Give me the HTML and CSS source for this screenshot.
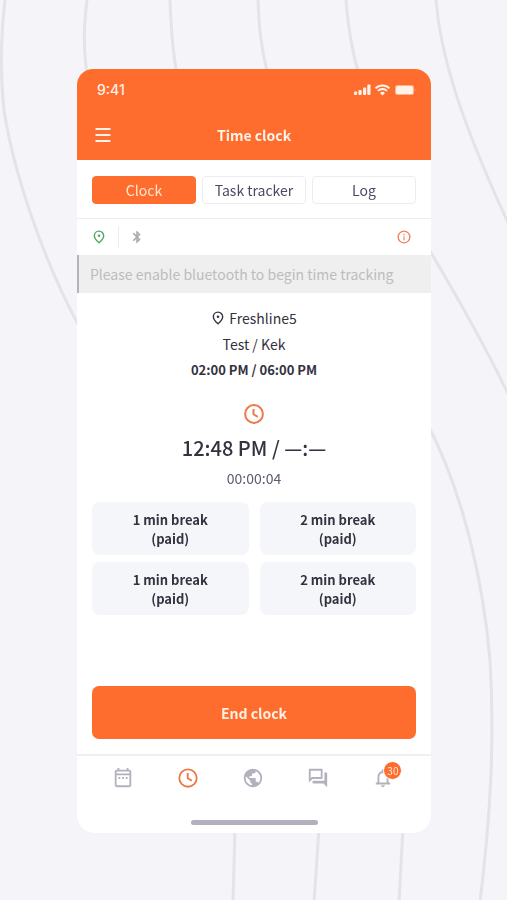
FILE: index.html
```html
<!DOCTYPE html>
<html lang="en">
<head>
<meta charset="utf-8">
<meta name="viewport" content="width=device-width, initial-scale=1">
<title>Time clock</title>
<link rel="stylesheet" href="styles.css">
</head>
<body>
<svg class="backdrop" viewBox="0 0 507 900" preserveAspectRatio="xMidYMid slice" aria-hidden="true">
  <path d="M5 0C1 35 0 75 4 110C13 170 42 258 80 328"/>
  <path d="M87 0C84 25 83 45 87 75"/>
  <path d="M170 0C171 28 172 48 177 75"/>
  <path d="M258 0C259 28 261 48 268 75"/>
  <path d="M346 0C348 28 351 48 359 75"/>
  <path d="M436 0C440 50 456 110 509 225"/>
  <path d="M427 246C455 293 485 345 509 396"/>
  <path d="M427 423C466 498 484 590 490 660C495 745 490 820 480 902"/>
  <path d="M235 828L233 902"/>
  <path d="M319 828L314 902"/>
  <path d="M403 828L399 902"/>
</svg>
<main class="phone">
  <header class="header">
    <div class="status">
      <span class="status-time">9:41</span>
      <svg class="status-icons" viewBox="0 0 62 12" fill="currentColor" aria-hidden="true">
        <rect x="0" y="7.500" width="3.200" height="3.500" rx="1"/><rect x="4.500" y="6" width="3.200" height="5" rx="1"/><rect x="9" y="3.500" width="3.200" height="7.500" rx="1"/><rect x="13.300" y="0.500" width="3.200" height="10.500" rx="1"/>
        <path d="M21.500 4.400a10 10 0 0 1 14 0M23.900 6.900a6.600 6.600 0 0 1 9.200 0" fill="none" stroke="currentColor" stroke-width="1.900"/>
        <path d="M26 9a3.600 3.600 0 0 1 5 0L28.500 11.500z"/>
        <rect x="41" y="1" width="19" height="10" rx="2.500" opacity=".5"/><rect x="42" y="2" width="17" height="8" rx="1.500"/><path d="M60.800 4.300q1.200 1.700 0 3.400z" opacity=".6"/>
      </svg>
    </div>
    <div class="titlebar">
      <button class="menu" aria-label="Menu"><svg viewBox="0 0 16 14" aria-hidden="true"><path d="M0.500 1h15M0.500 7h15M0.500 13h15"/></svg></button>
      <h1 class="title">Time clock</h1>
    </div>
  </header>

  <nav class="tabs" aria-label="Views">
    <button class="tab tab-active">Clock</button>
    <button class="tab">Task tracker</button>
    <button class="tab">Log</button>
  </nav>

  <div class="signals">
    <svg class="signal-pin" viewBox="0 0 24 24" aria-hidden="true"><path d="M12 2C7.600 2 4 5.500 4 9.900 4 15 12 22 12 22s8-7 8-12.100C20 5.500 16.400 2 12 2z" fill="none" stroke="currentColor" stroke-width="2.400"/><circle cx="12" cy="9.800" r="2.200" fill="currentColor"/></svg>
    <span class="signal-split"></span>
    <svg class="signal-bt" viewBox="0 0 24 24" fill="currentColor" aria-hidden="true"><path d="M17.710 7.710L12 2h-1v7.590L6.410 5 5 6.410 10.590 12 5 17.590 6.410 19 11 14.410V22h1l5.710-5.710-4.300-4.290 4.300-4.290zM13 5.830l1.880 1.880L13 9.590V5.830zm1.880 10.460L13 18.170v-3.760l1.880 1.880z" stroke="currentColor" stroke-width=".8"/></svg>
    <button class="info" aria-label="Information"><svg viewBox="0 0 24 24" aria-hidden="true"><circle cx="12" cy="12" r="10" fill="none" stroke="currentColor" stroke-width="2.400"/><path d="M11 6.500h2v2.300h-2zM11 10.500h2v7h-2z" fill="currentColor"/></svg></button>
  </div>

  <p class="notice">Please enable bluetooth to begin time tracking</p>

  <section class="shift">
    <p class="line place"><svg class="place-pin" viewBox="0 0 24 24" aria-hidden="true"><path d="M12 2C7.600 2 4 5.500 4 9.900 4 15 12 22 12 22s8-7 8-12.100C20 5.500 16.400 2 12 2z" fill="none" stroke="currentColor" stroke-width="2.400"/><circle cx="12" cy="9.800" r="2.200" fill="currentColor"/></svg>Freshline5</p>
    <p class="line">Test / Kek</p>
    <p class="line hours">02:00 PM / 06:00 PM</p>
    <svg class="shift-clock" viewBox="0 0 20 20" aria-hidden="true"><circle cx="10" cy="10" r="8.900"/><path d="M9.500 5v5.300l4.300 2.600"/></svg>
    <p class="now">12:48 PM / —:—</p>
    <p class="elapsed">00:00:04</p>
  </section>

  <section class="breaks" aria-label="Breaks">
    <button class="break">1 min break<br>(paid)</button>
    <button class="break">2 min break<br>(paid)</button>
    <button class="break">1 min break<br>(paid)</button>
    <button class="break">2 min break<br>(paid)</button>
  </section>

  <button class="end">End clock</button>

  <nav class="bottom" aria-label="Main">
    <a class="dest" href="#schedule" aria-label="Schedule"><svg viewBox="0 0 24 24" fill="currentColor" aria-hidden="true"><path d="M19 3h-1V1h-2v2H8V1H6v2H5a2 2 0 0 0-2 2v15a2 2 0 0 0 2 2h14a2 2 0 0 0 2-2V5a2 2 0 0 0-2-2zm0 17H5V9h14zM5 7V5h14v2zM7 11h2v2H7zm4 0h2v2h-2zm4 0h2v2h-2z"/></svg></a>
    <a class="dest dest-active" href="#clock" aria-label="Clock"><svg viewBox="0 0 24 24" fill="none" stroke="currentColor" stroke-width="2" aria-hidden="true"><circle cx="12" cy="12" r="9.500"/><path d="M11.700 6.500v5.800l4.500 2.700"/></svg></a>
    <a class="dest" href="#feed" aria-label="Feed"><svg viewBox="0 0 24 24" fill="currentColor" aria-hidden="true"><path d="M12 2C6.480 2 2 6.480 2 12s4.480 10 10 10 10-4.480 10-10S17.520 2 12 2zm-1 17.930c-3.950-.49-7-3.850-7-7.930 0-.62.080-1.210.210-1.790L9 15v1c0 1.100.9 2 2 2v1.930zm6.900-2.540c-.26-.81-1-1.390-1.900-1.390h-1v-3c0-.55-.45-1-1-1H8v-2h2c.55 0 1-.45 1-1V7h2c1.100 0 2-.9 2-2v-.41c2.930 1.190 5 4.060 5 7.410 0 2.080-.8 3.970-2.100 5.390z"/></svg></a>
    <a class="dest" href="#chat" aria-label="Chat"><svg viewBox="0 0 24 24" fill="currentColor" aria-hidden="true"><path d="M15 4v7H5.170L4 12.170V4h11m1-2H3c-.55 0-1 .45-1 1v14l4-4h10c.55 0 1-.45 1-1V3c0-.55-.45-1-1-1zm5 4h-2v9H6v2c0 .55.450 1 1 1h11l4 4V7c0-.55-.45-1-1-1z"/></svg></a>
    <a class="dest" href="#alerts" aria-label="Alerts"><svg viewBox="0 0 24 24" fill="currentColor" aria-hidden="true"><path d="M12 22c1.100 0 2-.9 2-2h-4c0 1.100.9 2 2 2zm6-6v-5c0-3.070-1.630-5.640-4.500-6.320V4c0-.83-.67-1.500-1.500-1.500s-1.500.67-1.500 1.500v.68C7.640 5.360 6 7.920 6 11v5l-2 2v1h16v-1l-2-2zm-2 1H8v-6c0-2.480 1.510-4.500 4-4.500s4 2.020 4 4.500v6z"/></svg><span class="badge">30</span></a>
  </nav>
  <div class="home"></div>
</main>
</body>
</html>
```
FILE: styles.css
```css
* { box-sizing: border-box; }

:root {
  --orange: #ff6d2e;
  --ink: #33323f;
  --muted: #b2b2be;
  --line: #ececf0;
}

body {
  margin: 0;
  min-height: 100vh;
  padding: 69px 76px 67px 77px;
  background: #f4f4f9;
  font-family: "Noto Sans CJK SC", "Noto Sans", sans-serif;
  font-size: 14px;
  line-height: 20px;
  color: var(--ink);
}

h1, p { margin: 0; }

button {
  border: 0;
  padding: 0;
  background: none;
  font: inherit;
  color: inherit;
}

svg { display: block; }

.backdrop {
  position: fixed;
  inset: 0;
  z-index: -1;
  width: 100%;
  height: 100%;
  fill: none;
  stroke: #e3e3e8;
  stroke-width: 3;
}

.phone {
  display: flex;
  flex-direction: column;
  background: #fff;
  border-radius: 18px;
}

.header {
  padding: 11px 15px 15px 18px;
  border-radius: 16px 16px 0 0;
  background: var(--orange);
  color: #fff2e8;
}

.status {
  display: flex;
  align-items: center;
  justify-content: space-between;
  padding-left: 2px;
}

.status-time {
  font-family: Inter, sans-serif;
  font-size: 14px;
  font-weight: 500;
}

.status-icons { width: 62px; height: 12px; }

.titlebar {
  display: grid;
  grid-template-columns: 16px 1fr 16px;
  align-items: center;
  margin-top: 25px;
  padding-right: 3px;
}

.menu svg {
  width: 16px;
  height: 14px;
  stroke: currentColor;
  stroke-width: 2;
}

.title {
  font-size: 14px;
  font-weight: 700;
  line-height: 20px;
  text-align: center;
}

.tabs {
  display: grid;
  grid-template-columns: repeat(3, 1fr);
  gap: 6px;
  padding: 16px 15px 14px;
  border-bottom: 1px solid var(--line);
}

.tab {
  height: 28px;
  border: 1px solid var(--line);
  border-radius: 4px;
  color: #4c4965;
}

.tab-active {
  border-color: var(--orange);
  background: var(--orange);
  color: #ffe6d2;
}

.signals {
  display: flex;
  align-items: center;
  height: 36px;
  padding: 0 20px 0 15px;
}

.signal-pin { width: 14px; height: 14px; color: #4fa662; }
.signal-split { width: 1px; height: 22px; margin: 0 11px 0 12px; background: var(--line); }
.signal-bt { width: 14px; height: 14px; color: #a9a9ad; }
.info { margin-left: auto; color: #f0855a; }
.info svg { width: 14px; height: 14px; }

.notice {
  padding: 9px 13px 9px 11px;
  border-left: 2px solid #b4b4b4;
  background: #efefef;
  color: #bcbcbe;
}

.shift {
  display: flex;
  flex-direction: column;
  align-items: center;
  padding-top: 12px;
}

.line { line-height: 26px; }
.place { display: flex; align-items: center; gap: 4px; }
.place-pin { width: 14px; height: 14px; }
.hours { font-size: 13px; font-weight: 700; }

.shift-clock {
  width: 20px;
  height: 20px;
  margin-top: 21px;
  fill: none;
  stroke: #ec7b4b;
  stroke-width: 2;
}

.now {
  margin-top: 8px;
  font-size: 20px;
  font-weight: 500;
  line-height: 32px;
}

.elapsed { margin-top: 4px; color: #5d5b70; }

.breaks {
  display: grid;
  grid-template-columns: 1fr 1fr;
  gap: 7px 11px;
  padding: 14px 15px 0;
}

.break {
  height: 53px;
  border-radius: 8px;
  background: #f5f6fa;
  font-size: 13px;
  font-weight: 700;
  line-height: 19px;
}

.end {
  margin: 71px 15px 15px;
  height: 53px;
  border-radius: 7px;
  background: var(--orange);
  color: #fff0e2;
  font-weight: 700;
}

.bottom {
  display: grid;
  grid-template-columns: repeat(5, 1fr);
  padding: 11px 15px 0 13px;
  border-top: 2px solid #f0f0f3;
}

.dest {
  position: relative;
  display: flex;
  justify-content: center;
  color: var(--muted);
}

.dest svg { width: 22px; height: 22px; }
.dest-active { color: #ee7845; }

.badge {
  position: absolute;
  top: -6px;
  left: 50%;
  width: 19px;
  height: 19px;
  border: 1px solid #fff;
  border-radius: 50%;
  background: var(--orange);
  color: #ffe9d9;
  font-size: 10px;
  line-height: 17px;
  text-align: center;
}

.home {
  width: 127px;
  height: 5px;
  margin: 31px auto 8px;
  border-radius: 3px;
  background: #b0b0bf;
}
```
